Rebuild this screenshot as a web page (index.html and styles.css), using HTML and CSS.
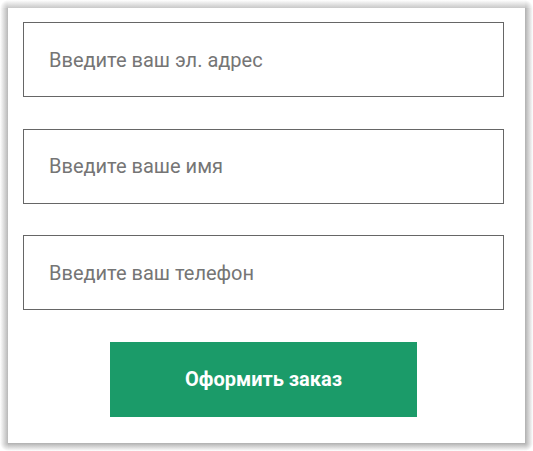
FILE: index.html
```html
<!DOCTYPE html>
<html lang="ru">
<head>
    <meta charset="UTF-8">
    <meta name="viewport" content="width=device-width, initial-scale=1.0">
    <title>Оформить заказ</title>
    <link rel="stylesheet" href="styles.css">
</head>
<body>
    <div class="shadow-frame">
        <div class="order-card">
            <form class="order-form">
                <div class="form-group">
                    <input type="email" class="field" placeholder="Введите ваш эл. адрес">
                </div>
                <div class="form-group">
                    <input type="text" class="field" placeholder="Введите ваше имя">
                </div>
                <div class="form-group">
                    <input type="tel" class="field" placeholder="Введите ваш телефон">
                </div>
                <button type="button" class="submit-btn">Оформить заказ</button>
            </form>
        </div>
    </div>
</body>
</html>
```

FILE: styles.css
```css
body {
    margin: 0;
    font-family: Roboto, "Liberation Sans", sans-serif;
    background: #fff;
}
/* soft shadow drawn as gradient strips + corners around the card */
.shadow-frame {
    width: 533px;
    height: 451px;
    box-sizing: border-box;
    padding: 8px;
    background:
        radial-gradient(circle at 100% 100%, #c4c4c4, #fff 8px) left top / 8px 8px no-repeat,
        radial-gradient(circle at 0 100%, #c0c0c0, #fff 8px) right top / 8px 8px no-repeat,
        radial-gradient(circle at 100% 0, #b8b8b8, #fff 8px) left bottom / 8px 8px no-repeat,
        radial-gradient(circle at 0 0, #b0b0b0, #fff 8px) right bottom / 8px 8px no-repeat,
        linear-gradient(to right, #fff, #b8b8b8) left center / 8px calc(100% - 16px) no-repeat,
        linear-gradient(to left, #fff, #b0b0b0) right center / 8px calc(100% - 16px) no-repeat,
        linear-gradient(to bottom, #fff, #c8c8c8) center top / calc(100% - 16px) 8px no-repeat,
        linear-gradient(to top, #fff, #b0b0b0) center bottom / calc(100% - 16px) 8px no-repeat,
        #fff;
}
.order-card {
    width: 517px;
    height: 435px;
    box-sizing: border-box;
    padding: 14px 21px 27px 15px;
    background-color: #fff;
}
.order-form {
    display: flex;
    flex-direction: column;
    align-items: center;
    margin: 0;
}
.form-group {
    width: 100%;
    margin-bottom: 31.5px;
}
.field {
    display: block;
    box-sizing: border-box;
    width: 100%;
    height: 75px;
    padding: 0 25px;
    border: 1px solid #666;
    border-radius: 0;
    font-family: inherit;
    font-size: 20px;
    color: #333;
    outline: none;
}
.field::placeholder {
    color: #757575;
}
.submit-btn {
    width: 307px;
    height: 75px;
    background-color: #1b9b69;
    color: #fff;
    border: none;
    font-family: inherit;
    font-size: 20px;
    font-weight: 700;
    cursor: pointer;
}
```
